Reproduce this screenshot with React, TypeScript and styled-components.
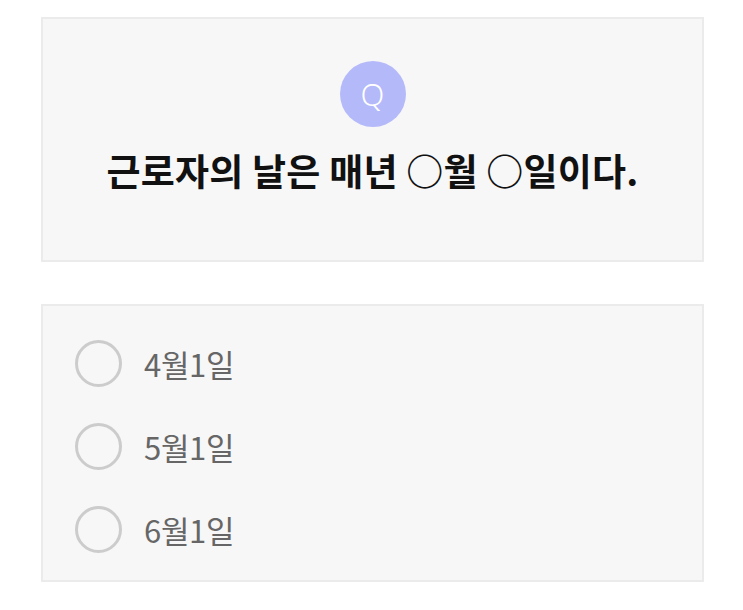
import React from 'react';
import styled, { createGlobalStyle } from 'styled-components';

const GlobalStyle = createGlobalStyle`
  body {
    margin: 0;
    background: #ffffff;
    font-family: "Noto Sans CJK KR", "Noto Sans", sans-serif;
  }
`;

const Page = styled.div`
  width: 743px;
  height: 610px;
  padding: 17px 39px 0 41px;
  box-sizing: border-box;
  display: flex;
  flex-direction: column;
  gap: 42px;
`;

const Card = styled.div`
  background: #f7f7f7;
  border: 2px solid #ebebeb;
  box-sizing: border-box;
`;

const QuestionCard = styled(Card)`
  height: 245px;
  display: flex;
  flex-direction: column;
  align-items: center;
  padding-top: 42px;
`;

const QBadge = styled.div`
  width: 66px;
  height: 66px;
  border-radius: 50%;
  background: #b4b9fa;
  color: #ffffff;
  display: flex;
  align-items: center;
  justify-content: center;
  font-family: "Noto Sans", sans-serif;
  font-size: 31px;
  font-weight: 300;
`;

const Title = styled.h1`
  margin: 18px 0 0;
  font-size: 37px;
  font-weight: 700;
  color: #111111;
  letter-spacing: 0.2px;
  line-height: 50px;
`;

const OptionsCard = styled(Card)`
  height: 278px;
  display: flex;
  flex-direction: column;
  gap: 36px;
  padding: 34px 0 0 32px;
`;

const OptionRow = styled.label`
  display: flex;
  align-items: center;
  gap: 22px;
`;

const Radio = styled.span`
  width: 47px;
  height: 47px;
  border-radius: 50%;
  border: 3px solid #cccccc;
  box-sizing: border-box;
`;

const OptionText = styled.span`
  font-size: 31px;
  color: #666666;
  letter-spacing: -0.3px;
`;

const options = ['4월1일', '5월1일', '6월1일'];

const App: React.FC = () => (
  <>
    <GlobalStyle />
    <Page>
      <QuestionCard>
        <QBadge>Q</QBadge>
        <Title>근로자의 날은 매년 ○월 ○일이다.</Title>
      </QuestionCard>
      <OptionsCard>
        {options.map(opt => (
          <OptionRow key={opt}>
            <Radio />
            <OptionText>{opt}</OptionText>
          </OptionRow>
        ))}
      </OptionsCard>
    </Page>
  </>
);

export default App;
